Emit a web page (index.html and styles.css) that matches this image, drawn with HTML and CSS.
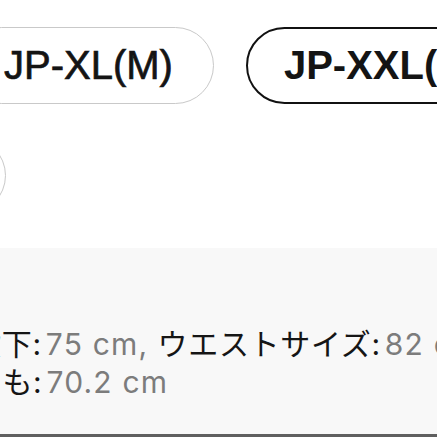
FILE: index.html
```html
<!DOCTYPE html>
<html lang="ja">
<head>
<meta charset="utf-8">
<link rel="stylesheet" href="styles.css">
</head>
<body>
<section class="sizes">
  <div class="row row-first">
    <div class="pill">JP-XL(M)</div>
    <div class="pill selected">JP-XXL(L)</div>
  </div>
  <div class="row row-second">
    <div class="pill">JP-XXXL(XL)</div>
  </div>
</section>
<section class="details">
  <div class="line line-a">股下:<span class="val">75 cm,</span> ウエストサイズ:<span class="val">82 cm</span></div>
  <div class="line line-b">太もも:<span class="val">70.2 cm</span></div>
</section>
</body>
</html>
```
FILE: styles.css
```css
html, body {
  margin: 0;
  padding: 0;
  background: #ffffff;
  overflow: hidden;
  width: 437px;
  height: 437px;
}

.sizes {
  box-sizing: border-box;
  height: 248px;
  padding-top: 27px;
  display: flex;
  flex-direction: column;
  gap: 33px;
}

.row {
  display: flex;
  gap: 32px;
}

.row-first {
  margin-left: -37px;
}

.row-second {
  width: 6px;
  justify-content: flex-end;
}

.pill {
  flex: none;
  box-sizing: border-box;
  height: 77px;
  border: 1.5px solid #c9c9c9;
  border-radius: 39px;
  padding: 0 40px;
  display: flex;
  align-items: center;
  font-family: "Liberation Sans", Arial, sans-serif;
  font-weight: 400;
  font-size: 40px;
  color: #141414;
  -webkit-text-stroke: 0.7px #141414;
  white-space: nowrap;
  background: #ffffff;
}

.pill.selected {
  border: 2.5px solid #111111;
  font-weight: 700;
  -webkit-text-stroke: 0;
  padding: 0 36px;
}

.details {
  box-sizing: border-box;
  height: 189px;
  background: #f8f8f8;
  border-bottom: 3px solid #5f5f5f;
  padding-top: 77px;
  font-family: Inter, "Noto Sans CJK JP", sans-serif;
  font-size: 30px;
  line-height: 38px;
  letter-spacing: 0.7px;
  color: #151515;
}

.line {
  white-space: nowrap;
}

.line-a {
  margin-left: -29px;
}

.line-b {
  margin-left: -59px;
}

.val {
  color: #7c7c7c;
  letter-spacing: 1.2px;
  margin-left: 4px;
}
```
